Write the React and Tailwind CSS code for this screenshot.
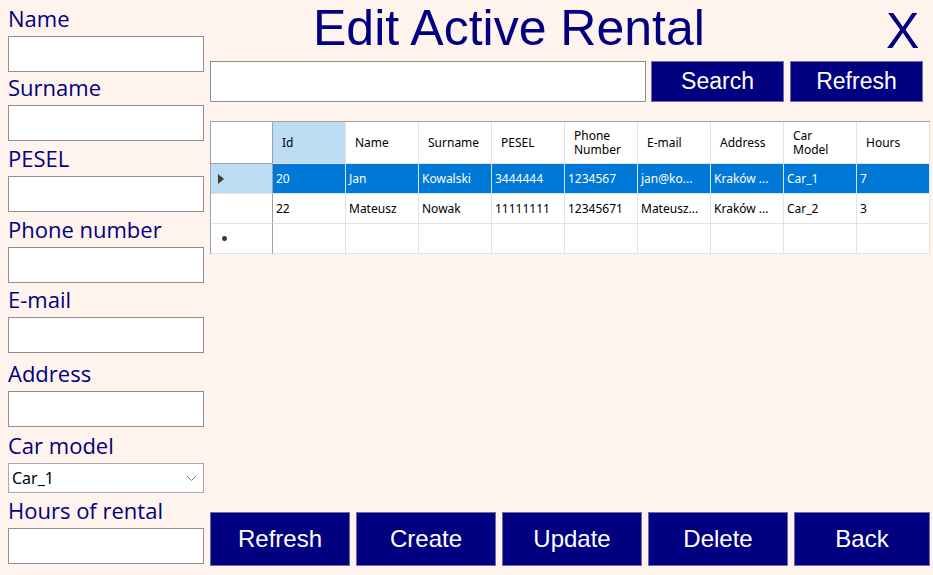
import React from 'react';

const fields = [
    { label: 'Name', h: 'h-[36px]' },
    { label: 'Surname', h: 'h-[33px]' },
    { label: 'PESEL', h: 'h-[35px]' },
    { label: 'Phone number', h: 'h-[35px]' },
    { label: 'E-mail', h: 'h-[34px]' },
    { label: 'Address', h: 'h-[38px]' },
];

const columns = [
    { key: 'id', title: 'Id' },
    { key: 'name', title: 'Name' },
    { key: 'surname', title: 'Surname' },
    { key: 'pesel', title: 'PESEL' },
    { key: 'phone', title: 'Phone Number' },
    { key: 'email', title: 'E-mail' },
    { key: 'address', title: 'Address' },
    { key: 'car', title: 'Car Model' },
    { key: 'hours', title: 'Hours' },
];

const rows = [
    { id: '20', name: 'Jan', surname: 'Kowalski', pesel: '3444444', phone: '1234567', email: 'jan@ko...', address: 'Kraków ...', car: 'Car_1', hours: '7' },
    { id: '22', name: 'Mateusz', surname: 'Nowak', pesel: '11111111', phone: '12345671', email: 'Mateusz...', address: 'Kraków ...', car: 'Car_2', hours: '3' },
];

const labelFont = { fontFamily: '"Open Sans", "Noto Sans", sans-serif' };
const arial = { fontFamily: '"Liberation Sans", Arial, sans-serif' };
const gridFont = { fontFamily: '"Noto Sans", "Open Sans", sans-serif' };

const Label = ({ children, h }) => (
    <div className={`${h} flex items-end pb-[5px] text-[22px] leading-[26px] text-[#000080]`} style={labelFont}>
        {children}
    </div>
);

const TextBox = () => <div className="h-[36px] w-full bg-white border border-[#8f8f8f]"></div>;

const NavyButton = ({ children, className }) => (
    <button
        className={`bg-[#000080] text-white border border-[#6c6cb0] flex items-center justify-center ${className}`}
        style={arial}
    >
        {children}
    </button>
);

const App = () => {
    return (
        <div className="w-[933px] h-[575px] bg-[#fff3ee] flex overflow-hidden">
            {/* Form column */}
            <div className="w-[196px] ml-[8px] flex flex-col">
                {fields.map(f => (
                    <div key={f.label}>
                        <Label h={f.h}>{f.label}</Label>
                        <TextBox />
                    </div>
                ))}
                <Label h="h-[36px]">Car model</Label>
                <div className="h-[30px] bg-white border border-[#a9a9a9] flex items-center justify-between pl-[3px] pr-[6px] text-[16px] text-black" style={gridFont}>
                    <span>Car_1</span>
                    <svg width="11" height="7" viewBox="0 0 11 7" fill="none" stroke="#7a7a7a" strokeWidth="1">
                        <path d="M1 1 L5.5 5.5 L10 1" />
                    </svg>
                </div>
                <Label h="h-[35px]">Hours of rental</Label>
                <TextBox />
            </div>

            {/* Main area */}
            <div className="ml-[6px] w-[720px] flex flex-col">
                <div className="h-[61px] relative flex items-start">
                    <h1 className="ml-[103px] mt-[3px] text-[50px] leading-none text-[#000080]" style={arial}>
                        Edit Active Rental
                    </h1>
                    <span className="absolute left-[676px] top-[6px] text-[50px] leading-none text-[#000080]" style={arial}>X</span>
                </div>

                <div className="flex h-[41px]">
                    <div className="w-[436px] h-full bg-white border border-[#8f8f8f]"></div>
                    <NavyButton className="ml-[5px] w-[133px] h-full text-[23px]">Search</NavyButton>
                    <NavyButton className="ml-[6px] w-[133px] h-full text-[23px]">Refresh</NavyButton>
                </div>

                {/* Data grid */}
                <div className="mt-[19px] border-t border-l border-[#a0a0a0] text-[12px] text-black" style={gridFont}>
                    <div className="flex h-[42px]">
                        <div className="w-[62px] bg-white border-r border-b border-[#a0a0a0]"></div>
                        {columns.map((c, i) => (
                            <div
                                key={c.key}
                                className={`w-[73px] flex items-center px-[9px] leading-[14px] border-r border-b border-[#e3e3e3] ${i === 0 ? 'bg-[#bcdcf4]' : 'bg-white'}`}
                            >
                                {c.title}
                            </div>
                        ))}
                    </div>
                    {rows.map((r, ri) => {
                        const sel = ri === 0;
                        return (
                            <div key={r.id} className="flex h-[30px]">
                                <div className={`w-[62px] flex items-center pl-[7px] border-r border-[#a0a0a0] border-b border-b-[#e3e3e3] ${sel ? 'bg-[#bcdcf4]' : 'bg-white'}`}>
                                    {sel && (
                                        <svg width="6" height="10" viewBox="0 0 6 10">
                                            <path d="M0 0 L6 5 L0 10 Z" fill="#3c3c3c" />
                                        </svg>
                                    )}
                                </div>
                                {columns.map(c => (
                                    <div
                                        key={c.key}
                                        className={`w-[73px] flex items-center px-[3px] whitespace-nowrap overflow-hidden border-r border-b ${sel ? 'bg-[#0078d7] text-white border-[#d5e6f5]' : 'bg-white border-[#e3e3e3]'}`}
                                    >
                                        {r[c.key]}
                                    </div>
                                ))}
                            </div>
                        );
                    })}
                    <div className="flex h-[30px]">
                        <div className="w-[62px] flex items-center pl-[11px] bg-white border-r border-[#a0a0a0] border-b border-b-[#e3e3e3]">
                            <span className="w-[5px] h-[5px] rounded-full bg-[#3c3c3c]"></span>
                        </div>
                        {columns.map(c => (
                            <div key={c.key} className="w-[73px] bg-white border-r border-b border-[#e3e3e3]"></div>
                        ))}
                    </div>
                </div>

                <div className="mt-auto mb-[9px] flex gap-[6px] h-[54px]">
                    {['Refresh', 'Create', 'Update', 'Delete'].map(t => (
                        <NavyButton key={t} className="w-[140px] shrink-0 h-full text-[24px]">{t}</NavyButton>
                    ))}
                    <NavyButton className="w-[136px] shrink-0 h-full text-[24px]">Back</NavyButton>
                </div>
            </div>
        </div>
    );
};

export default App;
